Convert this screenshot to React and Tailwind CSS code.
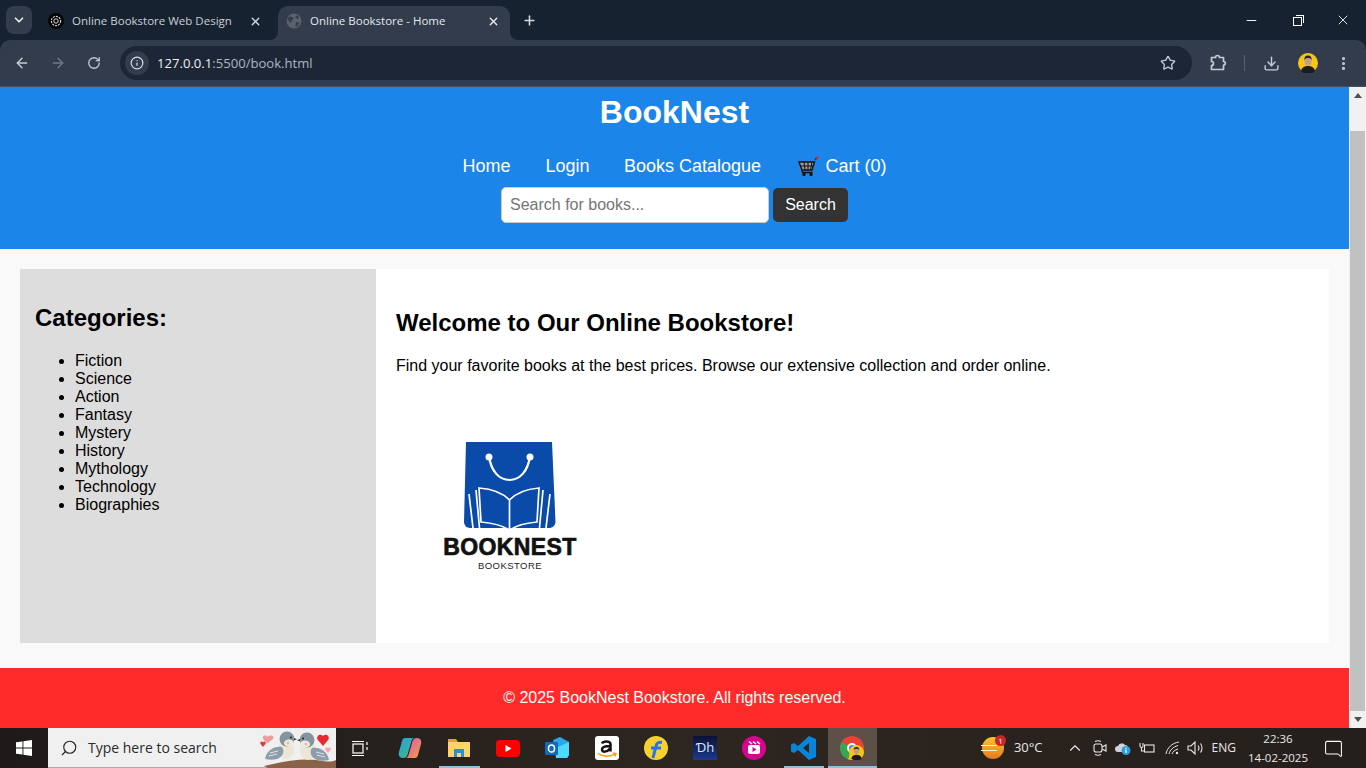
import React from "react";
import { ArrowLeft, ArrowRight, RotateCw, Info, Star, Download, EllipsisVertical, ChevronDown, ChevronUp, X, Plus, Minus, Search, MessageSquare } from "lucide-react";

const ui = { fontFamily: '"Open Sans", "Noto Sans", sans-serif' };
const page = { fontFamily: '"Liberation Sans", Arial, sans-serif' };

const categories = ["Fiction", "Science", "Action", "Fantasy", "Mystery", "History", "Mythology", "Technology", "Biographies"];

const Avatar = ({ size = 20 }) => (
  <svg width={size} height={size} viewBox="0 0 20 20">
    <circle cx="10" cy="10" r="10" fill="#f5c518" />
    <path d="M3 18c1-4 4-5 7-5s6 1 7 5a10 10 0 0 1-14 0z" fill="#1c1c1c" />
    <ellipse cx="10" cy="8" rx="3.6" ry="4.6" fill="#c99c84" />
    <path d="M6.2 7c0-3 1.6-4.4 3.8-4.4S13.8 4 13.8 7c-1-1.6-2-2-3.8-2S7.200 5.400 6.200 7z" fill="#222" />
  </svg>
);

const ChatLogo = () => (
  <svg width="16" height="16" viewBox="0 0 16 16">
    <circle cx="8" cy="8" r="8" fill="#050505" />
    <circle cx="8" cy="8" r="4.600" fill="none" stroke="#d8d8d8" strokeWidth="1.100" strokeDasharray="2 1" />
    <circle cx="8" cy="8" r="2.200" fill="none" stroke="#d8d8d8" strokeWidth="1" />
  </svg>
);

const Globe = () => (
  <svg width="16" height="16" viewBox="0 0 16 16">
    <circle cx="8" cy="8" r="7.500" fill="#5a616c" />
    <path d="M3 3.500l3.500.5 1 2-2 1.500-.5 2.500-2-1.500-1.500-3zM10 2l3 2-1 2-2.500-1zM10 9l3.500.5-1.500 3.500-2.500 1z" fill="#343d4b" />
  </svg>
);

const ExtensionIcon = () => (
  <svg width="18" height="18" viewBox="0 0 18 18" fill="none" stroke="#c5cbd4" strokeWidth="1.700" strokeLinejoin="round">
    <path d="M2.500 3.500h4a2 2 0 0 1 4 0h4v4a1.800 1.800 0 0 1 0 3.600v4.400h-12v-4a2 2 0 0 0 0-4z" />
  </svg>
);

const Cart = () => (
  <svg width="21" height="21" viewBox="0 0 21 21">
    <path d="M17 4l2-2.500" stroke="#333" strokeWidth="1.500" />
    <circle cx="19.300" cy="1.600" r="1.300" fill="#d93025" />
    <path d="M1 6h15.500l-2.500 8H4z" fill="#9a9a9a" stroke="#111" strokeWidth="1.400" />
    <path d="M6 6l1 8M10 6v8M14 6l-1.500 8M2.500 10h12.500" stroke="#111" strokeWidth="1" />
    <path d="M4 14l.5 2.500h10" fill="none" stroke="#111" strokeWidth="1.400" />
    <circle cx="6" cy="18.500" r="1.700" fill="#111" />
    <circle cx="13" cy="18.500" r="1.700" fill="#111" />
  </svg>
);

const BookLogo = () => (
  <div className="flex w-[228px] flex-col items-center pt-[67px]" style={page}>
    <svg width="92" height="88" viewBox="0 0 92 88">
      <path d="M2 0h86l3.500 80a6 6 0 0 1-5.500 6H6a6 6 0 0 1-6-6z" fill="#0a4aa8" />
      <path d="M25 14c2 15 10 24 20.500 24S64 29 66 14" fill="none" stroke="#fff" strokeWidth="2.200" />
      <circle cx="25" cy="15" r="3.500" fill="#fff" />
      <circle cx="66" cy="15" r="3.500" fill="#fff" />
      <path d="M45.500 58C38 50 28 47 15 46l2 34c11 1 21 3 28.500 8zM45.500 58C53 50 63 47 75 46l-2 34c-11 1-20 3-27.500 8z" fill="#0a4aa8" stroke="#fff" strokeWidth="1.700" />
      <path d="M12 48l3.500 38M5 52l4 34M79 48l-3.500 38M86 52l-4 34" fill="none" stroke="#fff" strokeWidth="1.700" />
    </svg>
    <div className="mt-[6px] text-[23px] leading-[22px] font-bold tracking-[0.4px] whitespace-nowrap text-[#111] [-webkit-text-stroke:0.7px_#111]">BOOKNEST</div>
    <div className="mt-[2px] text-[9.5px] leading-[11px] tracking-[0.45px] whitespace-nowrap text-[#222]">BOOKSTORE</div>
  </div>
);

const Bird = ({ flip }) => (
  <g transform={flip ? "translate(76 0) scale(-1 1)" : undefined}>
    <ellipse cx="27" cy="21" rx="8" ry="10" fill="#ece6d6" />
    <path d="M6 31c2-9 9-13 17-12 3 4 1 10-5 12-4 1-8 1-12 0z" fill="#8c9dac" />
    <path d="M11 25l8-2M10 28l8-2" stroke="#dfe5ea" strokeWidth="1" />
    <circle cx="28" cy="11" r="7.500" fill="#84939f" />
    <ellipse cx="30" cy="15" rx="5" ry="3.600" fill="#f0eadb" />
    <circle cx="29" cy="15" r="1.500" fill="#f0b6b0" />
    <circle cx="32" cy="9.500" r="1" fill="#222" />
    <path d="M35 10l3 1.200-3 1z" fill="#333" />
  </g>
);

const Birds = () => (
  <svg width="76" height="40" viewBox="0 0 76 40">
    <path d="M4 38c16-4 38-8 52-6 8 1 14 3 20 0v8H8z" fill="#8a6248" />
    <g transform="translate(-1 0)"><Bird /></g>
    <g transform="translate(-1 1)"><Bird flip /></g>
    <path d="M8 15c-3-3-6-1-5 2l3 3-1 0 3 1 5-4c2-3-3-5-5-2z" fill="#f19a9c" transform="translate(0 -6)" />
    <path d="M3 14c-1.500-1.500-3.500 0-2.500 2l2.500 3 2.500-3c1-2-1-3.500-2.500-2z" fill="#e23b40" />
    <path d="M63 8c-3-3-7 0-5.500 3.500L63 18l5.500-6.500C70 8 66 5 63 8z" fill="#e8282f" />
    <path d="M68 20c-1.500-1.500-3.500 0-2.500 2l2.500 3 2.500-3c1-2-1-3.500-2.500-2z" fill="#f4a6a8" />
  </svg>
);

const Copilot = () => (
  <svg width="24" height="24" viewBox="0 0 24 24">
    <defs>
      <linearGradient id="cpa" x1="0" y1="0" x2="1" y2="1"><stop offset="0" stopColor="#2e9bf0" /><stop offset="1" stopColor="#35c56a" /></linearGradient>
      <linearGradient id="cpb" x1="0" y1="0" x2="1" y2="1"><stop offset="0" stopColor="#d94fc4" /><stop offset="1" stopColor="#f5a23b" /></linearGradient>
    </defs>
    <path d="M7 2h10c-2 0-3 1-3.500 3L10 17c-.5 3-2 5-5 5-3.500 0-5-3-4-6l3-11c.5-2 1.500-3 3-3z" fill="url(#cpa)" />
    <path d="M17 22H7c2 0 3-1 3.500-3L14 7c.5-3 2-5 5-5 3.500 0 5 3 4 6l-3 11c-.5 2-1.500 3-3 3z" fill="url(#cpb)" />
  </svg>
);

const Explorer = () => (
  <svg width="22" height="20" viewBox="0 0 22 20">
    <path d="M0 1h8l2 3H0z" fill="#e0a526" />
    <rect y="4" width="22" height="15" fill="#fbd56b" />
    <rect x="6" y="11" width="10" height="8" fill="#2a8fd8" />
    <rect x="9" y="15" width="4" height="4" fill="#fbd56b" />
  </svg>
);

const Youtube = () => (
  <svg width="24" height="17" viewBox="0 0 24 17">
    <rect width="24" height="17" rx="4" fill="#f00" />
    <path d="M9.500 5l6 3.500-6 3.500z" fill="#fff" />
  </svg>
);

const Outlook = () => (
  <svg width="24" height="22" viewBox="0 0 24 22">
    <path d="M8 3l7-3 9 5v13l-2 3H11z" fill="#28a8ea" />
    <path d="M11 11l13-6v13l-2 3H11z" fill="#50d9ff" />
    <rect y="5" width="13" height="13" rx="1" fill="#0f6cbd" />
    <ellipse cx="6.500" cy="11.500" rx="3" ry="3.600" fill="none" stroke="#fff" strokeWidth="1.500" />
  </svg>
);

const Amazon = () => (
  <div className="flex h-6 w-6 flex-col items-center rounded-[3px] bg-white">
    <svg width="24" height="24" viewBox="0 0 24 24">
      <path d="M7 7.500c1-2.500 8-3 8.500.5v7.500M15 10c-4 0-8 .5-8 3.500s5 3 8-1" fill="none" stroke="#111" strokeWidth="2.500" />
      <path d="M3 17.500c5 3.500 12 3.500 17 .5M18 17l3 .5-1 3" fill="none" stroke="#f90" strokeWidth="1.400" />
    </svg>
  </div>
);

const Flipkart = () => (
  <svg width="24" height="24" viewBox="0 0 24 24">
    <circle cx="12" cy="12" r="12" fill="#f7d22f" />
    <path d="M9 22l3-12c.5-3 3-4 6-3.500M7 12h10" fill="none" stroke="#2874f0" strokeWidth="3" />
  </svg>
);

const Hotstar = () => (
  <div className="flex h-6 w-6 items-center justify-center bg-gradient-to-b from-[#0b1238] to-[#1b3a8c] text-[13px] text-[#dbe3f5]" style={ui}>Ɗh</div>
);

const JioCinema = () => (
  <svg width="24" height="24" viewBox="0 0 24 24">
    <circle cx="12" cy="12" r="12" fill="#d9048e" />
    <rect x="6" y="9" width="12" height="9" rx="2" fill="#fff" />
    <path d="M7 5.500l3 2.500M11 5.500l3 2.500M15 5.500l3 2.500" stroke="#fff" strokeWidth="1.600" />
    <path d="M10.500 11l4 2.500-4 2.500z" fill="#d9048e" />
  </svg>
);

const VsCode = () => (
  <svg width="25" height="24" viewBox="0 0 25 24">
    <path d="M18 0l7 3v18l-7 3L7 14l-4 3-3-1.500V8.500L3 7l4 3zM18 7l-6 5 6 5z" fill="#0a84d6" fillRule="evenodd" />
  </svg>
);

const ChromeAvatar = () => (
  <div className="relative h-6 w-6">
    <div className="h-6 w-6 rounded-full bg-[conic-gradient(#ea4335_0deg_120deg,#fbbc04_120deg_200deg,#34a853_200deg_300deg,#ea4335_300deg)]" />
    <div className="absolute top-[7px] left-[7px] h-[10px] w-[10px] rounded-full border-2 border-white bg-[#4285f4]" />
    <div className="absolute top-[9px] left-[9px]"><Avatar size={15} /></div>
  </div>
);

const TaskItem = ({ children, line, active }) => (
  <div className={`relative flex h-10 w-[49.2px] items-center justify-center ${active ? "bg-[#5c5048]" : ""}`}>
    {children}
    {line && <div className={`absolute bottom-0 h-[2px] bg-[#86c2e8] ${active ? "right-0 left-0" : "right-[4px] left-[5px]"}`} />}
  </div>
);

const TopBar = () => (
  <div className="h-[87px] shrink-0 bg-[#172231]" style={ui}>
    <div className="flex h-10 items-end">
      <div className="mb-[6px] ml-[6px] flex h-[28px] w-[26px] items-center justify-center rounded-lg bg-[#323c4c]">
        <ChevronDown size={14} strokeWidth={3} className="text-[#e6e9ee]" />
      </div>
      <div className="flex h-[34px] w-[246px] items-center pb-[4px] pl-[16px]">
        <ChatLogo />
        <span className="ml-[8px] text-[11.5px] whitespace-nowrap text-[#c9ced6]">Online Bookstore Web Design</span>
        <X size={13} strokeWidth={2.500} className="mr-[16px] ml-auto text-[#d5d9df]" />
      </div>
      <div className="relative flex h-[34px] w-[232px] items-center rounded-t-[10px] bg-[#323c4c] pb-[4px] pl-[8px]">
        <div className="absolute bottom-0 -left-[8px] h-[8px] w-[8px] bg-[#323c4c]"><div className="h-full w-full rounded-br-[8px] bg-[#172231]" /></div>
        <div className="absolute -right-[8px] bottom-0 h-[8px] w-[8px] bg-[#323c4c]"><div className="h-full w-full rounded-bl-[8px] bg-[#172231]" /></div>
        <Globe />
        <span className="ml-[8px] text-[11.5px] whitespace-nowrap text-[#e4e7eb]">Online Bookstore - Home</span>
        <X size={13} strokeWidth={2.500} className="mr-[10px] ml-auto text-[#e4e7eb]" />
      </div>
      <Plus size={15} strokeWidth={2.500} className="mb-[12px] ml-[12px] text-[#d5d9df]" />
      <div className="ml-auto flex h-10 items-center">
        <div className="flex w-[46px] justify-center"><Minus size={15} strokeWidth={1.500} className="text-white" /></div>
        <div className="flex w-[46px] justify-center">
          <div className="relative h-[9px] w-[9px] translate-y-[1px] border border-white">
            <div className="absolute -top-[3px] -right-[3px] h-[8px] w-[8px] border-t border-r border-white" />
          </div>
        </div>
        <div className="flex w-[46px] justify-center"><X size={16} strokeWidth={1.300} className="text-white" /></div>
      </div>
    </div>
    <div className="flex h-[47px] items-center rounded-t-[10px] border-b border-[#4a525e] bg-[#323c4c]">
      <ArrowLeft size={16} strokeWidth={2.200} className="ml-[14px] text-[#c5cbd4]" />
      <ArrowRight size={16} strokeWidth={2.200} className="ml-[20px] text-[#6f7786]" />
      <RotateCw size={14} strokeWidth={2.200} className="ml-[21px] text-[#c5cbd4]" />
      <div className="ml-[19px] flex h-[34px] w-[1072px] items-center rounded-full bg-[#1d2636] pl-[5px]">
        <div className="flex h-6 w-6 items-center justify-center rounded-full bg-[#323c4c]">
          <Info size={14} strokeWidth={2} className="text-[#d9dde3]" />
        </div>
        <span className="ml-[8px] pt-[1px] text-[13.1px] text-[#aeb6c2]"><span className="text-[#eef0f3]">127.0.0.1</span>:5500/book.html</span>
        <Star size={16} strokeWidth={2} className="mr-[16px] ml-auto text-[#c5cbd4]" />
      </div>
      <div className="ml-[17px]"><ExtensionIcon /></div>
      <div className="ml-[17px] h-[16px] w-[1px] bg-[#566070]" />
      <Download size={17} strokeWidth={2} className="ml-[18px] text-[#c5cbd4]" />
      <div className="ml-[18px]"><Avatar /></div>
      <EllipsisVertical size={17} strokeWidth={2.500} className="ml-[17px] text-[#c5cbd4]" />
    </div>
  </div>
);

const PageContent = () => (
  <div className="flex min-w-0 flex-1 flex-col text-black" style={page}>
    <header className="flex h-[162px] shrink-0 flex-col items-center bg-[#1c85ea] text-white">
      <h1 className="mt-[7px] text-[32px] leading-[37px] font-bold">BookNest</h1>
      <nav className="mt-[25px] flex h-[21px] items-center text-[18px] leading-[21px]">
        <a>Home</a>
        <a className="ml-[35px]">Login</a>
        <a className="ml-[34.500px]">Books Catalogue</a>
        <a className="ml-[36.500px] flex items-center gap-[7px]"><Cart /> Cart (0)</a>
      </nav>
      <div className="mt-[10px] flex items-center">
        <div className="flex h-[36px] w-[268px] items-center rounded-[5px] border border-[#ccc] bg-white pl-[8px] text-[16px] text-[#757575]">Search for books...</div>
        <button className="ml-[4px] h-[34px] w-[75px] rounded-[5px] bg-[#333] text-[16px] text-white">Search</button>
      </div>
    </header>
    <main className="flex h-[419px] shrink-0 bg-[#f9f9f9] px-[20px] pt-[20px]">
      <aside className="h-[374px] w-[356px] shrink-0 bg-[#ddd] px-[15px] pt-[35px]">
        <h2 className="text-[24px] leading-[28px] font-bold">Categories:</h2>
        <ul className="mt-[20px] list-disc pl-[40px] text-[16px] leading-[18px]">
          {categories.map((c) => <li key={c}>{c}</li>)}
        </ul>
      </aside>
      <section className="h-[374px] flex-1 bg-white px-[20px] pt-[40px]">
        <h2 className="text-[24px] leading-[28px] font-bold">Welcome to Our Online Bookstore!</h2>
        <p className="mt-[20px] text-[16px] leading-[18px]">Find your favorite books at the best prices. Browse our extensive collection and order online.</p>
        <BookLogo />
      </section>
    </main>
    <footer className="flex h-[60px] shrink-0 items-center justify-center bg-[#ff2a2a] text-[16px] text-white">
      © 2025 BookNest Bookstore. All rights reserved.
    </footer>
  </div>
);

const Scrollbar = () => (
  <div className="flex h-[641px] w-[17px] shrink-0 flex-col bg-[#f1f1f1]">
    <div className="flex h-[17px] items-center justify-center">
      <div className="h-0 w-0 border-r-[4px] border-b-[5px] border-l-[4px] border-r-transparent border-b-[#505050] border-l-transparent" />
    </div>
    <div className="mx-[1px] mt-[27px] h-[580px] bg-[#c1c1c1]" />
    <div className="mt-auto flex h-[17px] items-center justify-center">
      <div className="h-0 w-0 border-t-[5px] border-r-[4px] border-l-[4px] border-t-[#505050] border-r-transparent border-l-transparent" />
    </div>
  </div>
);

const Taskbar = () => (
  <div className="flex h-10 shrink-0 items-center bg-gradient-to-r from-[#1d1a19] via-[#2e2620] to-[#241f1c] text-white" style={ui}>
    <div className="flex h-10 w-[48px] items-center justify-center">
      <svg width="16" height="16" viewBox="0 0 16 16" fill="#fff">
        <path d="M0 2.300l6.500-.9v6.200H0zM7.400 1.300L16 0v7.600H7.400zM0 8.400h6.500v6.200L0 13.700zM7.400 8.400H16V16l-8.600-1.300z" />
      </svg>
    </div>
    <div className="flex h-10 w-[288px] items-center border-b border-[#aaa] bg-[#f0f0f0] pl-[12px]">
      <Search size={18} strokeWidth={1.500} className="-scale-x-100 text-[#222]" />
      <span className="ml-[10px] text-[14px] text-[#2a2a2a]">Type here to search</span>
      <div className="ml-auto"><Birds /></div>
    </div>
    <TaskItem>
      <svg width="17" height="17" viewBox="0 0 17 17" fill="none" stroke="#fff" strokeWidth="1.200">
        <rect x="1" y="4" width="10" height="9" />
        <path d="M0 1.500h12M0 15.500h12M15 2v3M15 7v3" />
      </svg>
    </TaskItem>
    <TaskItem><Copilot /></TaskItem>
    <TaskItem line><Explorer /></TaskItem>
    <TaskItem><Youtube /></TaskItem>
    <TaskItem><Outlook /></TaskItem>
    <TaskItem><Amazon /></TaskItem>
    <TaskItem><Flipkart /></TaskItem>
    <TaskItem><Hotstar /></TaskItem>
    <TaskItem><JioCinema /></TaskItem>
    <TaskItem line><VsCode /></TaskItem>
    <TaskItem line active><ChromeAvatar /></TaskItem>
    <div className="ml-auto flex h-10 items-center pr-[14px]">
      <div className="relative h-[22px] w-[23px]">
        <div className="h-[22px] w-[22px] rounded-full bg-gradient-to-b from-[#f7c531] to-[#e8781e]" />
        <div className="absolute top-[8px] -left-[1px] h-[1px] w-[16px] bg-[#fff1b8]" />
        <div className="absolute top-[13px] -left-[1px] h-[1px] w-[16px] bg-[#fff1b8]" />
        <div className="absolute -top-[2px] -right-[1px] flex h-[11px] w-[11px] items-center justify-center rounded-full bg-[#c62828] text-[8px] leading-none">1</div>
      </div>
      <span className="ml-[9px] text-[13px] text-[#e8e8e8]">30°C</span>
      <ChevronUp size={18} strokeWidth={1.500} className="ml-[23px] text-[#e8e8e8]" />
      <svg className="ml-[9px]" width="14" height="16" viewBox="0 0 14 16" fill="none" stroke="#e8e8e8" strokeWidth="1.100">
        <rect x="1" y="4" width="8" height="8" rx="2" />
        <path d="M9 7l4-2v6l-4-2M2 1.500c2-1 4-1 6 0M2 14.500c2 1 4 1 6 0" />
      </svg>
      <svg className="ml-[8px]" width="16" height="14" viewBox="0 0 16 14">
        <path d="M3 11a3 3 0 0 1 0-6 4 4 0 0 1 7-1 3 3 0 0 1 3 3v4z" fill="#cfd3d8" />
        <circle cx="11" cy="9.500" r="4.500" fill="#2f9de4" />
        <rect x="10.400" y="8.500" width="1.200" height="3.500" fill="#fff" />
        <rect x="10.400" y="6.700" width="1.200" height="1.200" fill="#fff" />
      </svg>
      <svg className="ml-[8px]" width="16" height="12" viewBox="0 0 16 12" fill="none" stroke="#e8e8e8" strokeWidth="1.100">
        <rect x="5.500" y="3" width="9.500" height="7" />
        <path d="M1 1v3a1.500 1.500 0 0 0 3 0V1M2.500 5.500V9h3" />
      </svg>
      <svg className="ml-[10px]" width="16" height="14" viewBox="0 0 16 14" fill="none" stroke="#e8e8e8" strokeWidth="1">
        <path d="M1 13C2 7 7 2 14 1M4 13c1-4 4-7 9-8.500M7 13c.5-2 2.500-4 6-5" />
        <circle cx="12" cy="12" r="1.200" fill="#e8e8e8" stroke="none" />
      </svg>
      <svg className="ml-[6px]" width="18" height="14" viewBox="0 0 18 14" fill="none" stroke="#e8e8e8" strokeWidth="1.100">
        <path d="M1 5h3l4-4v12l-4-4H1zM11 4.500c1.200 1.500 1.200 3.500 0 5M13.500 2.500c2 2.500 2 6.500 0 9" />
      </svg>
      <span className="ml-[7px] text-[12px] text-[#e8e8e8]">ENG</span>
      <div className="ml-[6px] flex w-[72px] flex-col items-center text-[11.5px] leading-[19px] text-[#e8e8e8]">
        <span>22:36</span>
        <span className="whitespace-nowrap">14-02-2025</span>
      </div>
      <div className="flex w-[38px] justify-center">
        <MessageSquare size={19} strokeWidth={1.300} className="-scale-x-100 text-white" />
      </div>
    </div>
  </div>
);

export default function App() {
  return (
    <div className="flex h-[768px] w-[1366px] flex-col overflow-hidden">
      <TopBar />
      <div className="flex h-[641px] shrink-0">
        <PageContent />
        <Scrollbar />
      </div>
      <Taskbar />
    </div>
  );
}
